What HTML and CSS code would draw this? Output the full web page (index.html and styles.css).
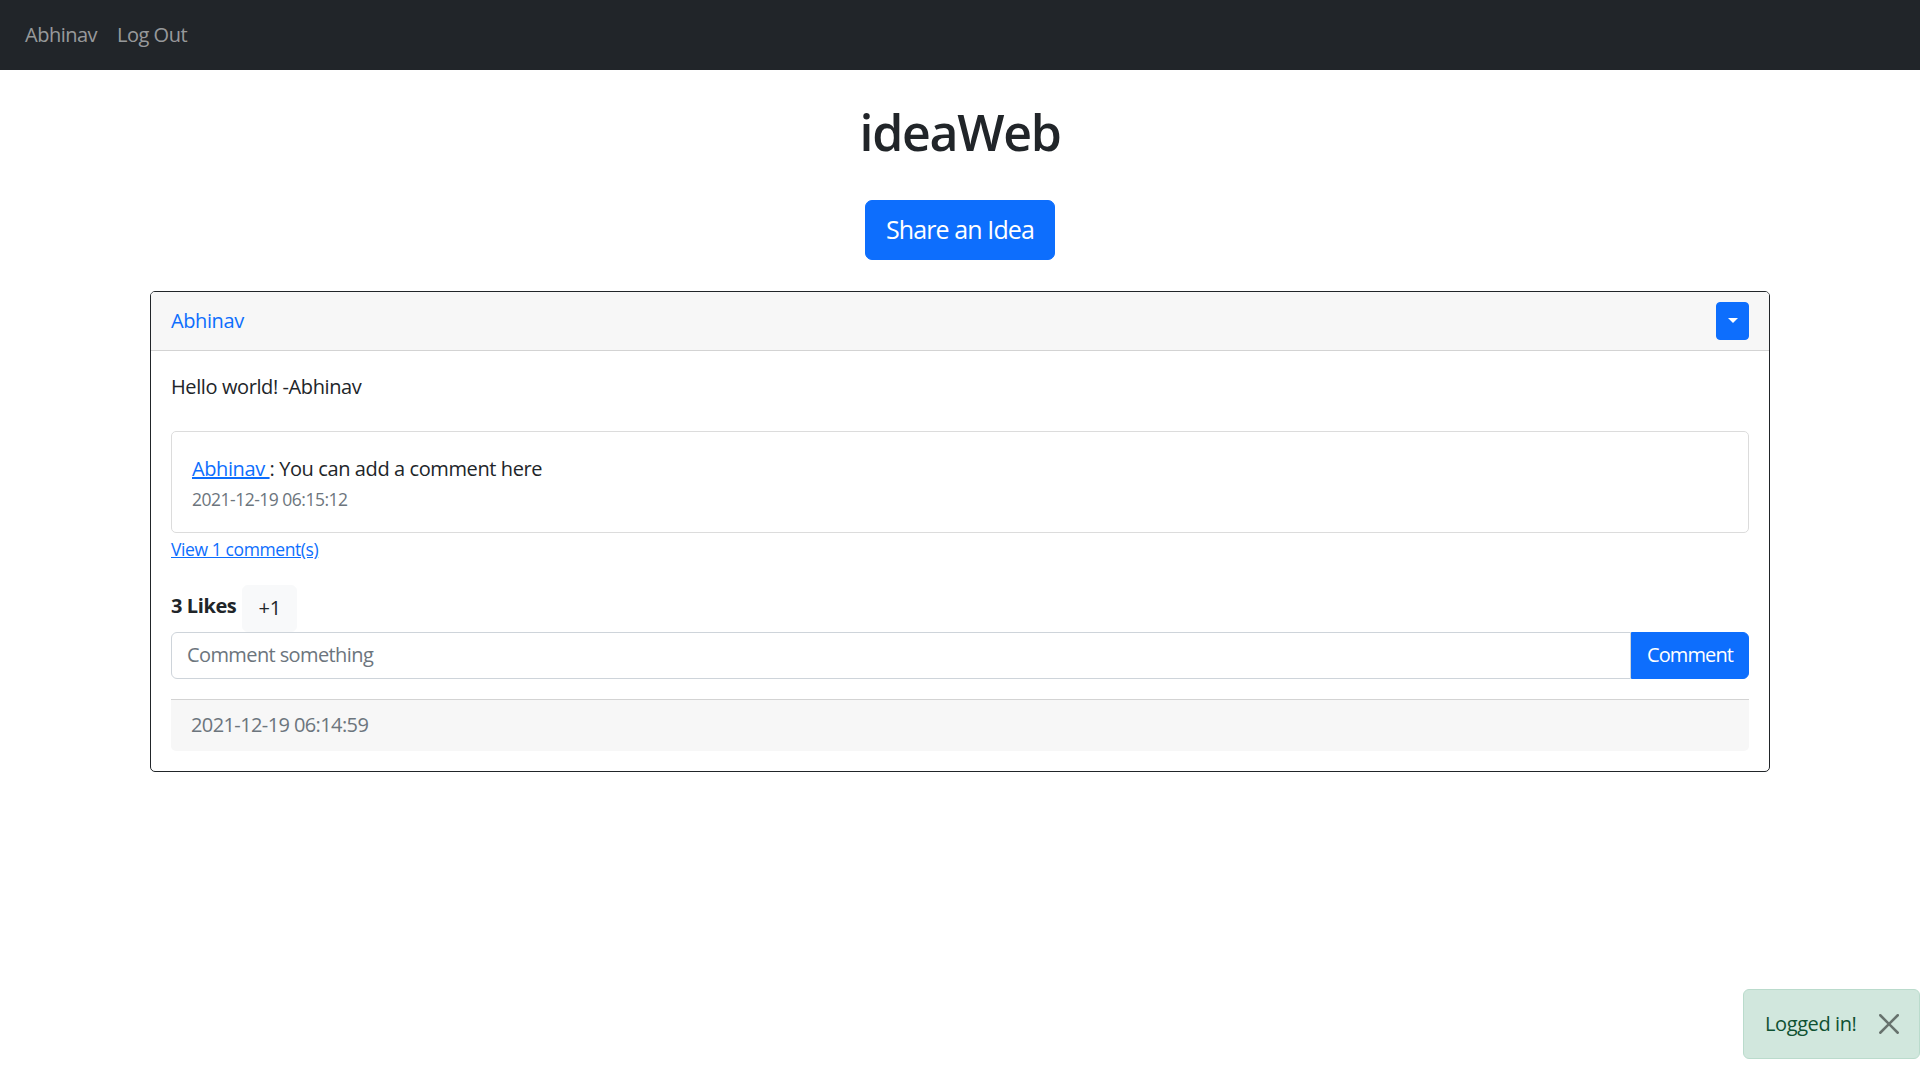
FILE: index.html
```html
<!DOCTYPE html>
<html lang="en">
<head>
<meta charset="utf-8">
<title>ideaWeb</title>
<link rel="stylesheet" href="styles.css">
</head>
<body>
<nav class="navbar">
  <ul class="nav">
    <li><a class="nav-link" href="#">Abhinav</a></li>
    <li><a class="nav-link" href="#">Log Out</a></li>
  </ul>
</nav>

<main class="container">
  <h1 class="title">ideaWeb</h1>
  <div class="share-wrap">
    <a class="btn-share" href="#">Share an Idea</a>
  </div>

  <section class="card">
    <header class="card-header">
      <a class="author" href="#">Abhinav</a>
      <button class="btn-dropdown" type="button" aria-label="Options"><span class="caret"></span></button>
    </header>
    <div class="card-body">
      <p class="idea-text">Hello world! -Abhinav</p>

      <div class="comment-box">
        <div class="comment-line"><a class="comment-author" href="#">Abhinav </a>: You can add a comment here</div>
        <div class="comment-date">2021-12-19 06:15:12</div>
      </div>
      <a class="view-comments" href="#">View 1 comment(s)</a>

      <div class="likes-row">
        <strong class="likes">3 Likes</strong>
        <button class="btn-like" type="button">+1</button>
      </div>

      <form class="input-group">
        <input class="comment-input" type="text" placeholder="Comment something">
        <button class="btn-comment" type="button">Comment</button>
      </form>

      <div class="card-footer">2021-12-19 06:14:59</div>
    </div>
  </section>
</main>

<div class="alert">
  Logged in!
  <button class="btn-close" type="button" aria-label="Close">
    <svg viewBox="0 0 16 16" width="20" height="20"><path d="M.293.293a1 1 0 0 1 1.414 0L8 6.586 14.293.293a1 1 0 1 1 1.414 1.414L9.414 8l6.293 6.293a1 1 0 0 1-1.414 1.414L8 9.414l-6.293 6.293a1 1 0 0 1-1.414-1.414L6.586 8 .293 1.707a1 1 0 0 1 0-1.414z"/></svg>
  </button>
</div>
</body>
</html>
```
FILE: styles.css
```css
html { overflow-x: hidden; }
body {
  margin: 0;
  font-family: "Open Sans", "Noto Sans", sans-serif;
  font-size: 20px;
  line-height: 1.5;
  letter-spacing: -0.4px;
  color: #212529;
  background: #fff;
}
a { color: #0d6efd; }

.navbar {
  background: #212529;
  padding: 10px 15px;
}
.nav {
  display: flex;
  list-style: none;
  margin: 0;
  padding: 0;
}
.nav-link {
  display: block;
  padding: 10px;
  color: rgba(255,255,255,.55);
  text-decoration: none;
  line-height: 30px;
  letter-spacing: -0.5px;
}

.container {
  width: 1620px;
  margin: 0 auto;
}
.title {
  text-align: center;
  font-size: 50px;
  font-weight: 600;
  line-height: 60px;
  margin: 32px 0 0;
  letter-spacing: -1.3px;
}
.share-wrap {
  text-align: center;
  margin-top: 38px;
}
.btn-share {
  display: inline-block;
  background: #0d6efd;
  color: #fff;
  border: 1px solid #0d6efd;
  border-radius: 7px;
  padding: 10px 20px;
  font-size: 25px;
  line-height: 37.5px;
  text-decoration: none;
  letter-spacing: -0.9px;
}

.card {
  margin-top: 31px;
  border: 1px solid #212529;
  border-radius: 5px;
  overflow: hidden;
}
.card-header {
  display: flex;
  justify-content: space-between;
  align-items: center;
  padding: 10px 20px;
  background: #f7f7f7;
  border-bottom: 1px solid #d3d3d3;
}
.author { text-decoration: none; }
.btn-dropdown {
  width: 33px;
  height: 38px;
  background: #0d6efd;
  border: 1px solid #0d6efd;
  border-radius: 4px;
  padding: 0;
  display: flex;
  align-items: center;
  justify-content: center;
}
.caret {
  width: 0;
  height: 0;
  border-left: 5px solid transparent;
  border-right: 5px solid transparent;
  border-top: 5px solid #fff;
}

.card-body { padding: 21px 20px 20px; }
.idea-text { margin: 0 0 29px; }

.comment-box {
  border: 1px solid #dcdcdc;
  border-radius: 5px;
  padding: 22px 20px 20px;
}
.comment-line { line-height: 30px; }
.comment-date {
  margin-top: 2px;
  font-size: 17.5px;
  line-height: 26px;
  color: #6c757d;
  letter-spacing: -0.5px;
}
.view-comments {
  display: inline-block;
  margin-top: 3px;
  font-size: 17.5px;
  line-height: 26px;
  letter-spacing: -0.4px;
}

.likes-row {
  display: flex;
  align-items: flex-start;
  gap: 6px;
  margin-top: 21px;
}
.likes {
  font-weight: 700;
  padding-top: 6px;
  line-height: 30px;
}
.btn-like {
  font: inherit;
  line-height: 30px;
  background: #f8f9fa;
  border: 1px solid #f8f9fa;
  border-radius: 6px;
  padding: 7.5px 15px;
  color: #212529;
}

.input-group {
  display: flex;
  margin: 0;
}
.comment-input {
  flex: 1;
  font: inherit;
  line-height: 30px;
  padding: 7.5px 15px;
  border: 1px solid #ced4da;
  border-radius: 6px 0 0 6px;
  color: #212529;
  outline: none;
  letter-spacing: -0.6px;
}
.comment-input::placeholder { color: #6c757d; }
.btn-comment {
  font: inherit;
  line-height: 30px;
  padding: 7.5px 15px;
  background: #0d6efd;
  border: 1px solid #0d6efd;
  color: #fff;
  border-radius: 0 6px 6px 0;
  letter-spacing: -0.9px;
}

.card-footer {
  margin-top: 20px;
  background: #f7f7f7;
  border-top: 1px solid #d3d3d3;
  border-radius: 0 0 5px 5px;
  padding: 10px 20px 11px;
  color: #6c757d;
  letter-spacing: -0.6px;
}

.alert {
  position: fixed;
  right: 0;
  bottom: 21px;
  width: 177px;
  box-sizing: border-box;
  background: #d1e7dd;
  border: 1px solid #badbcc;
  border-radius: 6px;
  color: #0f5132;
  padding: 19px 0 19px 21px;
  line-height: 30px;
  white-space: nowrap;
}
.btn-close {
  position: absolute;
  top: 0;
  right: 0;
  padding: 24px 20px;
  background: none;
  border: 0;
  opacity: .5;
  line-height: 0;
}
.btn-close svg { display: block; fill: #000; }
```
